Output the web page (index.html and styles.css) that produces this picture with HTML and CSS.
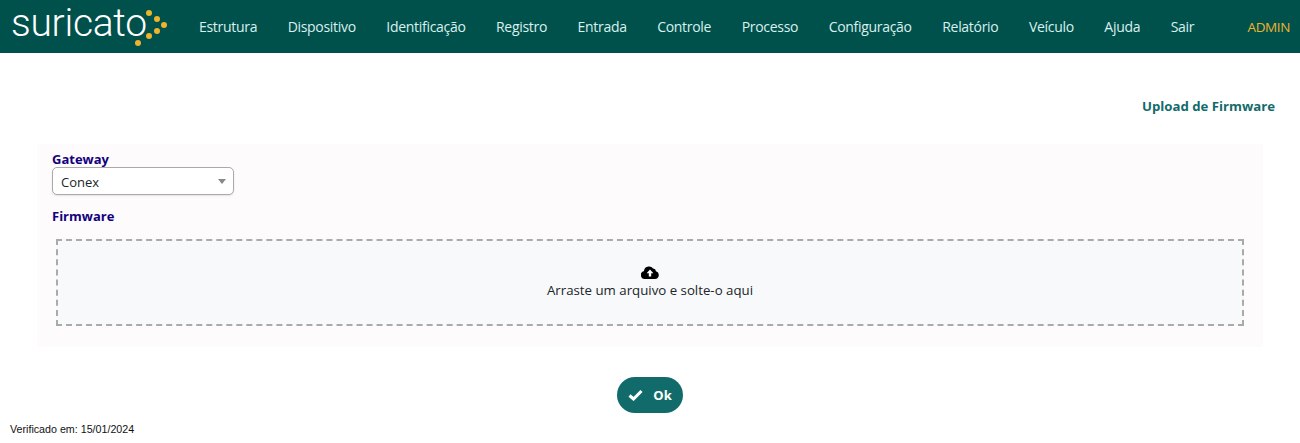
FILE: index.html
```html
<!DOCTYPE html>
<html lang="pt-BR">
<head>
    <meta charset="UTF-8">
    <title>Upload de Firmware</title>
    <link rel="stylesheet" href="styles.css">
</head>
<body>
    <nav class="navbar">
        <a class="brand" href="#">
            <span class="brand-name">suricato</span>
            <svg class="brand-dots" width="34" height="40" viewBox="0 0 34 40">
                <circle cx="15" cy="5" r="3" />
                <circle cx="23" cy="11" r="3" />
                <circle cx="30" cy="17" r="3" />
                <circle cx="23" cy="23" r="3" />
                <circle cx="15" cy="28" r="3" />
                <circle cx="4" cy="35" r="3" />
            </svg>
        </a>
        <ul class="menu">
            <li>Estrutura</li>
            <li>Dispositivo</li>
            <li>Identificação</li>
            <li>Registro</li>
            <li>Entrada</li>
            <li>Controle</li>
            <li>Processo</li>
            <li>Configuração</li>
            <li>Relatório</li>
            <li>Veículo</li>
            <li>Ajuda</li>
            <li>Sair</li>
        </ul>
        <span class="user">ADMIN</span>
    </nav>

    <h1 class="page-title">Upload de Firmware</h1>

    <form class="panel">
        <label class="field-label" for="gateway">Gateway</label>
        <div class="select-box" id="gateway">
            <span class="select-value">Conex</span>
            <span class="select-arrow"></span>
        </div>
        <label class="field-label firmware-label">Firmware</label>
        <div class="dropzone">
            <svg class="cloud" width="18" height="14" viewBox="0 0 18 14">
                <path fill="#000" d="M4 14a4 4 0 0 1-1-7.900A5 5 0 0 1 7.500 1.500a5 5 0 0 1 4.600 1.900A3.200 3.200 0 0 1 15 6.200 4 4 0 0 1 14 14z" />
                <path fill="#fff" d="M9 4.500 12.400 8.200H10.200V11.500H7.800V8.200H5.600z" />
            </svg>
            <span>Arraste um arquivo e solte-o aqui</span>
        </div>
    </form>

    <div class="actions">
        <button type="button" class="ok-btn">
            <svg width="15" height="12" viewBox="0 0 15 12">
                <path fill="none" stroke="#fff" stroke-width="3" d="M1.500 6.500 5.500 10 13.500 2" />
            </svg>
            <span>Ok</span>
        </button>
    </div>

    <footer class="verified">Verificado em: 15/01/2024</footer>
</body>
</html>
```

FILE: styles.css
```css
:root {
    --nav-color: #00504c;
    --teal: #126b6b;
    --label-color: #12007f;
    --yellow: #eeb42c;
}

* {
    box-sizing: border-box;
}

html,
body {
    height: 100%;
}

body {
    margin: 0;
    font-family: 'Open Sans', sans-serif;
    background-color: #fff;
    color: #212529;
    overflow: hidden;
}

.navbar {
    display: flex;
    align-items: center;
    height: 53px;
    padding: 0 10px 0 12px;
    background-color: var(--nav-color);
}

.brand {
    display: flex;
    flex: none;
    align-items: flex-start;
    width: 172px;
    height: 53px;
    color: #fff;
    text-decoration: none;
}

.brand-name {
    margin-left: -1px;
    font-family: Roboto, sans-serif;
    font-size: 39px;
    font-weight: 300;
    line-height: 46px;
    letter-spacing: -0.3px;
}

.brand-dots {
    flex: none;
    fill: var(--yellow);
    margin: 8px 0 0 -13px;
}

.menu {
    display: flex;
    flex: 1;
    align-items: center;
    gap: 30.500px;
    margin: 0;
    padding: 0 0 0 15px;
    list-style: none;
    color: #d9f1ec;
    font-size: 14px;
    letter-spacing: -0.3px;
}

.user {
    color: var(--yellow);
    font-size: 13.500px;
    letter-spacing: -0.4px;
}

.page-title {
    margin: 44px 25px 0 0;
    color: var(--teal);
    font-size: 13.200px;
    font-weight: 700;
    line-height: 18px;
    text-align: right;
}

.panel {
    display: flex;
    flex-direction: column;
    align-items: flex-start;
    height: 203px;
    margin: 29px 37px 0;
    padding: 7px 15px 0;
    background-color: #fdfbfc;
}

.field-label {
    color: var(--label-color);
    font-size: 13px;
    font-weight: 700;
    line-height: 16px;
}

.select-box {
    display: flex;
    align-items: center;
    justify-content: space-between;
    width: 182px;
    height: 28px;
    padding: 0 7px 0 8px;
    border: 1px solid #aaa;
    border-radius: 5px;
    background-color: #fff;
    font-size: 13px;
    box-shadow: 0 1px 2px rgba(0, 0, 0, 0.1);
}

.select-value {
    margin-top: 2px;
}

.select-arrow {
    width: 0;
    height: 0;
    border-left: 4px solid transparent;
    border-right: 4px solid transparent;
    border-top: 5px solid #888;
}

.firmware-label {
    margin-top: 13px;
}

.dropzone {
    display: flex;
    flex-direction: column;
    align-items: center;
    justify-content: center;
    gap: 2px;
    width: 1188px;
    height: 87px;
    margin: 15px 0 0 4px;
    padding-bottom: 2px;
    border: 2px dashed #aaa;
    background-color: #f8f9fa;
    font-size: 13.250px;
    color: #212529;
}

.actions {
    display: flex;
    justify-content: center;
    margin-top: 30px;
}

.ok-btn {
    display: flex;
    align-items: center;
    justify-content: center;
    gap: 10px;
    width: 66px;
    height: 36px;
    padding: 0;
    border: none;
    border-radius: 18px;
    background-color: var(--teal);
    color: #fff;
    font-family: inherit;
    font-size: 13px;
    font-weight: 700;
}

.verified {
    margin: 10px 0 0 10px;
    font-family: 'Liberation Sans', sans-serif;
    font-size: 10.700px;
    line-height: 12px;
    color: #111;
}
```
